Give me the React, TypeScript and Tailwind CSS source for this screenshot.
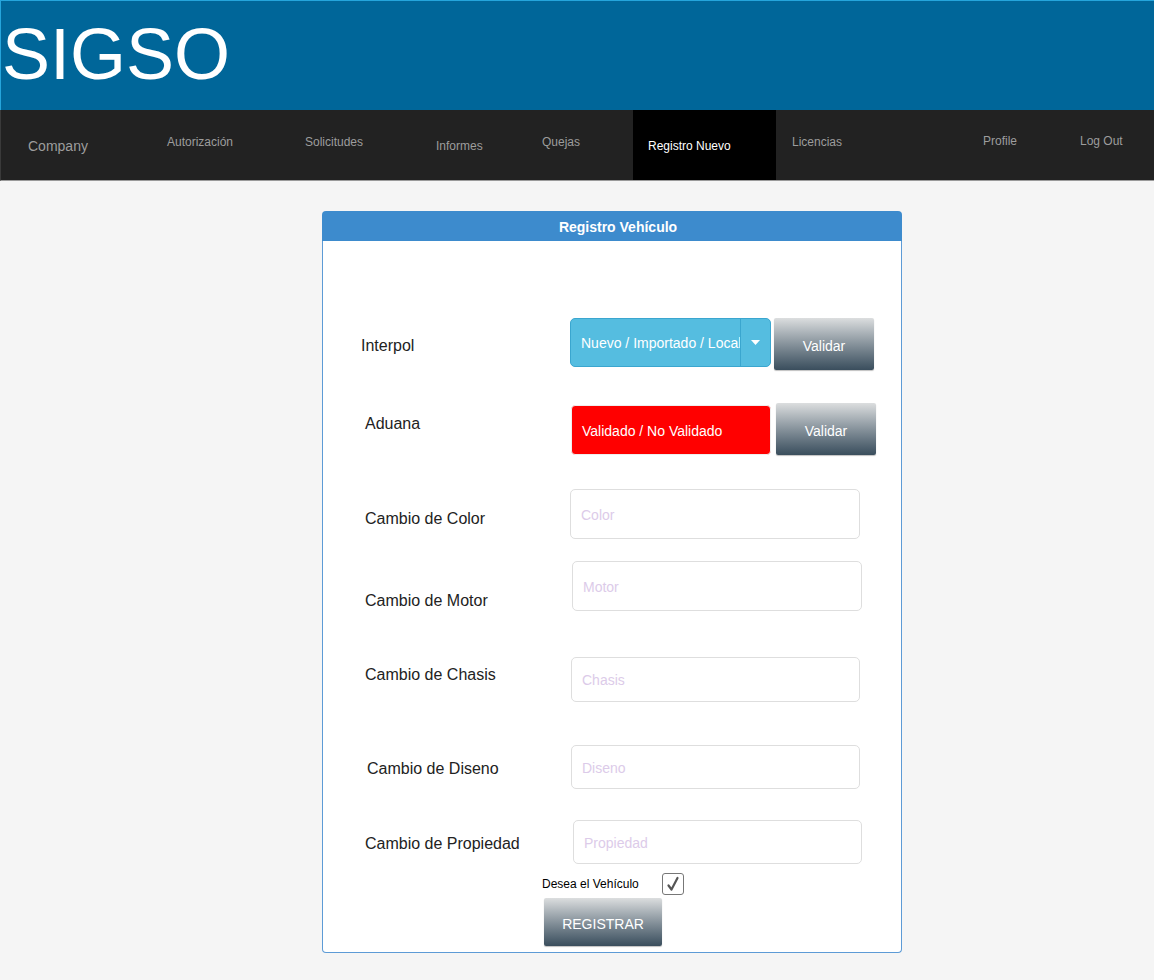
import React from 'react';

const navItems = [
  { label: 'Autorización', cls: 'w-[138px] pt-[23px]' },
  { label: 'Solicitudes', cls: 'w-[131px] pt-[23px]' },
  { label: 'Informes', cls: 'w-[106px] pt-[27px]' },
  { label: 'Quejas', cls: 'w-[91px] pt-[23px]' },
];

const fields = [
  { label: 'Cambio de Color', ph: 'Color', mt: 'mt-[34px]', labelMt: 'mt-[21px]', pl: 'pl-[42px]', box: 'ml-[0px] w-[290px] h-[50px]' },
  { label: 'Cambio de Motor', ph: 'Motor', mt: 'mt-[22px]', labelMt: 'mt-[31px]', pl: 'pl-[42px]', box: 'ml-[2px] w-[290px] h-[50px]' },
  { label: 'Cambio de Chasis', ph: 'Chasis', mt: 'mt-[46px]', labelMt: 'mt-[9px]', pl: 'pl-[42px]', box: 'ml-[1px] w-[289px] h-[45px]' },
  { label: 'Cambio de Diseno', ph: 'Diseno', mt: 'mt-[43px]', labelMt: 'mt-[15px]', pl: 'pl-[44px]', box: 'ml-[1px] w-[289px] h-[44px]' },
  { label: 'Cambio de Propiedad', ph: 'Propiedad', mt: 'mt-[31px]', labelMt: 'mt-[15px]', pl: 'pl-[42px]', box: 'ml-[3px] w-[289px] h-[44px]' },
];

const btn = 'bg-linear-to-b from-[#dcdedf] to-[#3a4e5d] text-white text-[14px] rounded-[2px] shadow-[0_1px_1px_rgba(0,0,0,0.25)] flex items-center justify-center pt-[3px]';

export default function App() {
  return (
    <div className="min-h-[980px] bg-[#f5f5f5] font-['Liberation_Sans',Arial,sans-serif]">
      <header className="h-[110px] bg-[#006699] border-t border-l border-[#25a5dc]">
        <h1 className="text-white text-[72px] leading-none pl-[1px] pt-[17px]">SIGSO</h1>
      </header>
      <nav className="h-[71px] bg-[#222222] border-l border-[#3a3a3a] border-b border-b-[#9a9a9a] flex text-[#9d9d9d] text-[12px] leading-[18px]">
        <div className="w-[166px] pl-[27px] pt-[27px] text-[14px]">Company</div>
        {navItems.map((n) => (
          <div key={n.label} className={n.cls}>{n.label}</div>
        ))}
        <div className="w-[143px] h-full bg-black text-white pl-[15px] pt-[27px]">Registro Nuevo</div>
        <div className="w-[207px] pl-[16px] pt-[23px]">Licencias</div>
        <div className="w-[97px] pt-[22px]">Profile</div>
        <div className="pt-[22px]">Log Out</div>
      </nav>

      <div className="pt-[30px] pl-[322px]">
        <div className="w-[580px]">
          <div className="h-[30px] bg-[#3d8bcd] rounded-t-[4px] flex items-center justify-center pl-[12px] pt-[2px] text-white font-bold text-[14px]">
            Registro Vehículo
          </div>
          <div className="h-[712px] flex flex-col bg-white border border-t-0 border-[#5d9bd6] rounded-b-[4px] text-[16px] leading-[18px] text-[#222]">
            {/* Interpol */}
            <div className="flex mt-[77px]">
              <div className="w-[247px] shrink-0 pl-[38px] mt-[19px]">Interpol</div>
              <div className="w-[201px] h-[49px] bg-[#55bde0] border border-[#3aa6cf] rounded-[5px] flex overflow-hidden text-white text-[14px]">
                <div className="flex-1 pl-[10px] pt-[1px] flex items-center whitespace-nowrap overflow-hidden">Nuevo / Importado / Local</div>
                <div className="w-[30px] border-l border-[#3aa6cf] flex items-center justify-center">
                  <svg width="9" height="5" viewBox="0 0 9 5"><path d="M0 0h9L4.5 5z" fill="#fff" /></svg>
                </div>
              </div>
              <div className={`${btn} ml-[3px] w-[100px] h-[52px]`}>Validar</div>
            </div>
            {/* Aduana */}
            <div className="flex mt-[33px]">
              <div className="w-[248px] shrink-0 pl-[42px] mt-[12px]">Aduana</div>
              <div className="mt-[2px] w-[200px] h-[50px] bg-[#ff0000] rounded-[4px] border border-[#eeeeee] flex items-center pl-[10px] pt-[2px] text-white text-[14px]">
                Validado / No Validado
              </div>
              <div className={`${btn} ml-[5px] w-[100px] h-[52px]`}>Validar</div>
            </div>
            {fields.map((f) => (
              <div key={f.ph} className={`flex ${f.mt}`}>
                <div className={`w-[247px] shrink-0 ${f.pl} ${f.labelMt} whitespace-nowrap`}>{f.label}</div>
                <div className={`${f.box} border border-[#dedede] rounded-[5px] flex items-center pl-[10px] pt-[1px] text-[14px] text-[#dccbe9]`}>
                  {f.ph}
                </div>
              </div>
            ))}
            <div className="flex items-center mt-[9px] pl-[219px]">
              <span className="text-[12px] text-black">Desea el Vehículo</span>
              <div className="ml-[23px] w-[22px] h-[22px] border border-[#777] rounded-[3px] bg-white flex items-center justify-center">
                <svg width="16" height="16" viewBox="0 0 16 16">
                  <path d="M3.5 9.5l3 4L12.5 2" fill="none" stroke="#555" strokeWidth="2.2" strokeLinecap="round" strokeLinejoin="round" />
                </svg>
              </div>
            </div>
            <div className={`${btn} ml-[221px] mt-[3px] w-[118px] h-[48px]`}>REGISTRAR</div>
          </div>
        </div>
      </div>
    </div>
  );
}
